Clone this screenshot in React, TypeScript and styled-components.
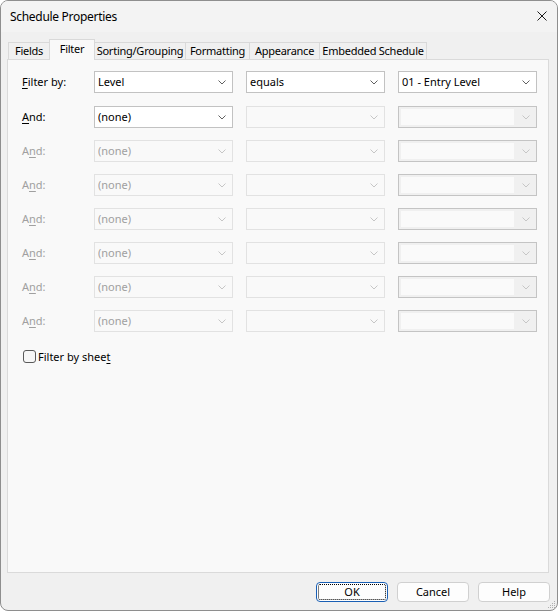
import React from 'react';
import styled, { createGlobalStyle, css } from 'styled-components';

const GlobalStyle = createGlobalStyle`
  html, body { margin: 0; padding: 0; background: #ffffff; }
  body {
    font-family: "Segoe UI", "Noto Sans", "Liberation Sans", sans-serif;
    font-size: 11px;
    color: #000;
  }
  * { box-sizing: border-box; }
`;

const Window = styled.div`
  position: relative;
  width: 558px;
  height: 611px;
  border: 1px solid #8e8e8e;
  border-radius: 8px;
  background: #f0f0f0;
  display: flex;
  flex-direction: column;
  overflow: hidden;
`;

const TitleBar = styled.div`
  height: 31px;
  flex: none;
  display: flex;
  align-items: center;
  justify-content: space-between;
  padding: 0 10px 1px 9px;
  background: #f3f3f3;
`;

const Title = styled.span`
  font-size: 12px;
  letter-spacing: -0.3px;
  color: #000;
`;

const CloseIcon = styled.svg`
  width: 10px;
  height: 10px;
  display: block;
`;

const TabStrip = styled.div`
  flex: none;
  display: flex;
  align-items: flex-end;
  height: 20px;
  margin: 7px 0 0 7px;
  position: relative;
  z-index: 1;
`;

const Tab = styled.div<{ $w: number; $active?: boolean }>`
  width: ${(p) => p.$w}px;
  height: 17px;
  margin-left: -1px;
  display: flex;
  align-items: center;
  justify-content: center;
  padding-bottom: 1px;
  border: 1px solid #d9d9d9;
  border-bottom: none;
  background: #f0f0f0;
  white-space: nowrap;
  letter-spacing: -0.25px;
  ${(p) =>
    p.$active &&
    css`
      height: 21px;
      margin-bottom: -1px;
      background: #f9f9f9;
      align-items: flex-start;
      padding: 1px 0 0;
      position: relative;
      z-index: 2;
    `}
  &:first-child { margin-left: 0; }
`;

const Panel = styled.div`
  flex: 1;
  margin: 0 8px 0 6px;
  background: #f9f9f9;
  border: 1px solid #dadada;
  padding: 11px 10px 0 14px;
  display: flex;
  flex-direction: column;
`;

const FilterGrid = styled.div`
  display: grid;
  grid-template-columns: 59px 139px 139px 139px;
  grid-template-rows: 23px repeat(7, 22px);
  column-gap: 13px;
  row-gap: 12px;
  align-items: start;
`;

const Label = styled.div<{ $disabled?: boolean }>`
  height: 22px;
  display: flex;
  align-items: center;
  padding-bottom: 1px;
  color: ${(p) => (p.$disabled ? '#a0a0a0' : '#000')};
  white-space: nowrap;
`;

const Key = styled.span`
  text-decoration: underline;
  text-underline-offset: 2px;
`;

type ComboState = 'enabled' | 'disabled' | 'empty';

const Combo = styled.div<{ $state: ComboState }>`
  height: 22px;
  display: flex;
  align-items: center;
  padding-left: 3px;
  border: 1px solid #c2c2c2;
  background: #ffffff;
  color: #000;
  ${(p) =>
    p.$state === 'disabled' &&
    css`
      border-color: #e2e2e2;
      background: #f9f9f9;
      color: #a0a0a0;
    `}
  ${(p) =>
    p.$state === 'empty' &&
    css`
      border-color: #c4c4c4;
      background: #f0f0f0;
      padding-left: 2px;
    `}
`;

const ComboText = styled.span`
  flex: 1;
  white-space: nowrap;
  overflow: hidden;
  padding-bottom: 1px;
`;

const EmptyField = styled.span`
  flex: 1;
  height: 16px;
  background: #fafafa;
  margin-right: 4px;
`;

const Chevron = styled.svg<{ $muted?: boolean }>`
  width: 8px;
  height: 5px;
  flex: none;
  margin: 0 6px 0 4px;
  display: block;
  stroke: ${(p) => (p.$muted ? '#c6c6c6' : '#606060')};
`;

const CheckRow = styled.label`
  display: flex;
  align-items: center;
  margin-top: 16px;
  margin-left: 1px;
  height: 16px;
`;

const CheckBox = styled.span`
  width: 13px;
  height: 13px;
  border: 1px solid #5a5a5a;
  border-radius: 3px;
  background: #f7f7f7;
  margin-right: 2px;
  flex: none;
`;

const Footer = styled.div`
  height: 37px;
  flex: none;
  display: flex;
  justify-content: flex-end;
  align-items: flex-start;
  gap: 9px;
  padding: 9px 7px 0 0;
`;

const Button = styled.button<{ $default?: boolean }>`
  width: 72px;
  height: 20px;
  padding: 0 0 1px;
  font: inherit;
  color: #000;
  background: #fdfdfd;
  border: 1px solid #d0d0d0;
  border-radius: 4px;
  ${(p) =>
    p.$default &&
    css`
      border-color: #1a5fb4;
      outline: 1px dotted #000;
      outline-offset: -3px;
    `}
`;

const Grip = styled.svg`
  position: absolute;
  right: 1px;
  bottom: 1px;
  width: 8px;
  height: 8px;
`;

const ChevronIcon = ({ muted }: { muted?: boolean }) => (
  <Chevron $muted={muted} viewBox="0 0 8 5" fill="none" strokeWidth="1">
    <path d="M0.5 0.5 L4 4 L7.5 0.5" />
  </Chevron>
);

const ComboBox = ({ state, text }: { state: ComboState; text?: string }) => (
  <Combo $state={state}>
    {state === 'empty' ? <EmptyField /> : <ComboText>{text}</ComboText>}
    <ChevronIcon muted={state !== 'enabled'} />
  </Combo>
);

const disabledRows = 6;

export default function App() {
  return (
    <>
      <GlobalStyle />
      <Window>
        <TitleBar>
          <Title>Schedule Properties</Title>
          <CloseIcon viewBox="0 0 10 10" stroke="#1a1a1a" strokeWidth="1" fill="none">
            <path d="M0.5 0.5 L9.5 9.5 M9.5 0.5 L0.5 9.5" />
          </CloseIcon>
        </TitleBar>
        <TabStrip>
          <Tab $w={42}>Fields</Tab>
          <Tab $w={46} $active>Filter</Tab>
          <Tab $w={92}>Sorting/Grouping</Tab>
          <Tab $w={65}>Formatting</Tab>
          <Tab $w={71}>Appearance</Tab>
          <Tab $w={108}>Embedded Schedule</Tab>
        </TabStrip>
        <Panel>
          <FilterGrid>
            <Label>
              <Key>F</Key>ilter by:
            </Label>
            <ComboBox state="enabled" text="Level" />
            <ComboBox state="enabled" text="equals" />
            <ComboBox state="enabled" text="01 - Entry Level" />

            <Label>
              <Key>A</Key>nd:
            </Label>
            <ComboBox state="enabled" text="(none)" />
            <ComboBox state="disabled" />
            <ComboBox state="empty" />

            {Array.from({ length: disabledRows }).map((_, i) => (
              <React.Fragment key={i}>
                <Label $disabled>
                  A<Key>n</Key>d:
                </Label>
                <ComboBox state="disabled" text="(none)" />
                <ComboBox state="disabled" />
                <ComboBox state="empty" />
              </React.Fragment>
            ))}
          </FilterGrid>
          <CheckRow>
            <CheckBox />
            Filter by shee<Key>t</Key>
          </CheckRow>
        </Panel>
        <Footer>
          <Button $default>OK</Button>
          <Button>Cancel</Button>
          <Button>Help</Button>
        </Footer>
        <Grip viewBox="0 0 8 8" fill="#b0b0b0">
          <rect x="6" y="0" width="1" height="1" />
          <rect x="4" y="2" width="1" height="1" />
          <rect x="6" y="2" width="1" height="1" />
          <rect x="2" y="4" width="1" height="1" />
          <rect x="4" y="4" width="1" height="1" />
          <rect x="6" y="4" width="1" height="1" />
          <rect x="0" y="6" width="1" height="1" />
          <rect x="2" y="6" width="1" height="1" />
          <rect x="4" y="6" width="1" height="1" />
          <rect x="6" y="6" width="1" height="1" />
        </Grip>
      </Window>
    </>
  );
}
